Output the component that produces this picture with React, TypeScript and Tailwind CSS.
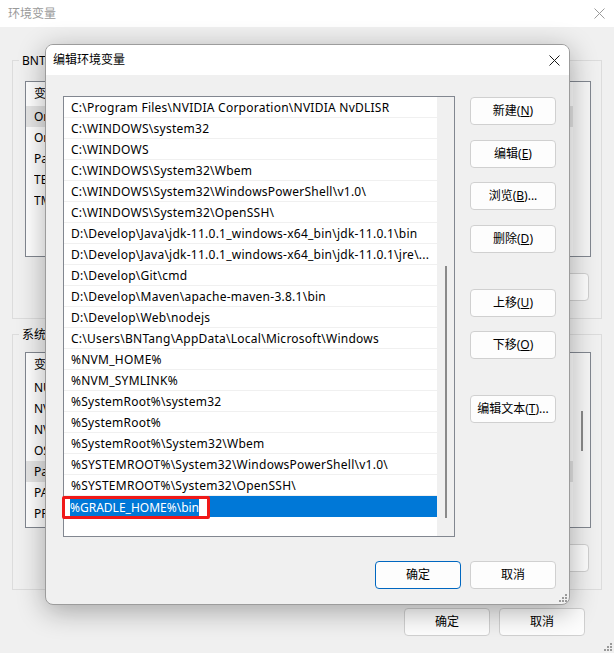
import React from "react";

const paths = [
  "C:\\Program Files\\NVIDIA Corporation\\NVIDIA NvDLISR",
  "C:\\WINDOWS\\system32",
  "C:\\WINDOWS",
  "C:\\WINDOWS\\System32\\Wbem",
  "C:\\WINDOWS\\System32\\WindowsPowerShell\\v1.0\\",
  "C:\\WINDOWS\\System32\\OpenSSH\\",
  "D:\\Develop\\Java\\jdk-11.0.1_windows-x64_bin\\jdk-11.0.1\\bin",
  "D:\\Develop\\Java\\jdk-11.0.1_windows-x64_bin\\jdk-11.0.1\\jre\\...",
  "D:\\Develop\\Git\\cmd",
  "D:\\Develop\\Maven\\apache-maven-3.8.1\\bin",
  "D:\\Develop\\Web\\nodejs",
  "C:\\Users\\BNTang\\AppData\\Local\\Microsoft\\Windows",
  "%NVM_HOME%",
  "%NVM_SYMLINK%",
  "%SystemRoot%\\system32",
  "%SystemRoot%",
  "%SystemRoot%\\System32\\Wbem",
  "%SYSTEMROOT%\\System32\\WindowsPowerShell\\v1.0\\",
  "%SYSTEMROOT%\\System32\\OpenSSH\\",
];

const userVars = [
  ["OneDrive", "C:\\Users\\BNTang\\OneDrive"],
  ["OneDriveConsumer", "C:\\Users\\BNTang\\OneDrive"],
  ["Path", "C:\\Users\\BNTang\\AppData\\Local\\Microsoft\\WindowsApps;"],
  ["TEMP", "C:\\Users\\BNTang\\AppData\\Local\\Temp"],
  ["TMP", "C:\\Users\\BNTang\\AppData\\Local\\Temp"],
];

const sysVars = [
  ["NUMBER_OF_PROCESSORS", "12"],
  ["NVCUDASAMPLES_ROOT", "C:\\ProgramData\\NVIDIA Corporation\\CUDA Samples"],
  ["NVTOOLSEXT_PATH", "C:\\Program Files\\NVIDIA Corporation\\NvToolsExt\\"],
  ["OS", "Windows_NT"],
  ["Path", "C:\\Program Files\\NVIDIA Corporation\\NVIDIA NvDLISR;"],
  ["PATHEXT", ".COM;.EXE;.BAT;.CMD;.VBS;.VBE;.JS;.JSE;.WSF;.WSH;.MSC"],
  ["PROCESSOR_ARCHITECTURE", "AMD64"],
];

const CloseIcon = ({ color }: { color: string }) => (
  <svg width="11" height="11" viewBox="0 0 11 11">
    <path d="M0.5 0.5L10.5 10.5M10.5 0.5L0.5 10.5" stroke={color} strokeWidth="1" />
  </svg>
);

const Grip = () => (
  <svg width="8" height="8" viewBox="0 0 8 8" fill="#9a9a9a">
    <rect x="6" y="0" width="2" height="2" />
    <rect x="3" y="3" width="2" height="2" />
    <rect x="6" y="3" width="2" height="2" />
    <rect x="0" y="6" width="2" height="2" />
    <rect x="3" y="6" width="2" height="2" />
    <rect x="6" y="6" width="2" height="2" />
  </svg>
);

const Btn = ({
  children,
  primary,
  className = "",
}: {
  children: React.ReactNode;
  primary?: boolean;
  className?: string;
}) => (
  <div
    className={
      "flex w-[86px] h-[28px] items-center justify-center rounded-[4px] border bg-[#fdfdfd] text-[12px] text-black " +
      (primary ? "border-[#0067c0] " : "border-[#d0d0d0] ") +
      className
    }
  >
    {children}
  </div>
);

const VarList = ({ rows, selected, thumb }: { rows: string[][]; selected: number; thumb?: boolean }) => (
  <div className="flex h-[176px] border border-[#828790] bg-white">
    <div className="flex-1 flex flex-col">
      <div className="flex h-[24px] items-center pl-[8px] text-[12px]">
        <span className="w-[150px]">变量</span>
        <span>值</span>
      </div>
      {rows.map((r, i) => (
        <div
          key={r[0]}
          className={"flex h-[21px] items-center pl-[8px] text-[12px] " + (i === selected ? "bg-[#e5e5e5]" : "")}
        >
          <span className="w-[150px] truncate">{r[0]}</span>
          <span className="w-[360px] truncate">{r[1]}</span>
        </div>
      ))}
    </div>
    <div className="w-[17px] bg-[#f7f7f7] flex justify-center">
      {thumb && <div className="mt-[58px] h-[40px] w-[2px] bg-[#8a8a8a]" />}
    </div>
  </div>
);

const GroupButtons = () => (
  <div className="mt-[16px] flex justify-end gap-[8px] pr-[2px]">
    <Btn className="h-[26px]">新建(<span className="underline">W</span>)...</Btn>
    <Btn className="h-[26px]">编辑(<span className="underline">I</span>)...</Btn>
    <Btn className="h-[26px]">删除(<span className="underline">L</span>)</Btn>
  </div>
);

export default function App() {
  return (
    <div className="relative w-[614px] h-[653px] overflow-hidden bg-[#f0f0f0] font-['Noto_Sans','Noto_Sans_CJK_SC',sans-serif] text-black">
      {/* background window: 环境变量 */}
      <div className="flex h-[27px] items-center justify-between bg-white pl-[8px] pr-[9px] text-[12px] text-[#9a9a9a]">
        <span>环境变量</span>
        <CloseIcon color="#9a9a9a" />
      </div>
      <div className="flex flex-col px-[12px] pt-[25px]">
        <fieldset className="border border-[#dcdcdc] pl-[12px] pr-[10px] pt-[12px] pb-[17px]">
          <legend className="ml-[-6px] px-[3px] text-[12px] leading-[17px]">BNTang 的用户变量(<span className="underline">U</span>)</legend>
          <VarList rows={userVars} selected={0} />
          <GroupButtons />
        </fieldset>
        <fieldset className="mt-[7px] border border-[#dcdcdc] pl-[12px] pr-[10px] pt-[9px] pb-[17px]">
          <legend className="ml-[-6px] px-[3px] text-[12px] leading-[17px]">系统变量(<span className="underline">S</span>)</legend>
          <VarList rows={sysVars} selected={4} thumb />
          <GroupButtons />
        </fieldset>
        <div className="mt-[18px] flex justify-end gap-[9px] pr-[17px]">
          <Btn>确定</Btn>
          <Btn>取消</Btn>
        </div>
      </div>
      <div className="absolute right-[2px] bottom-[2px]">
        <Grip />
      </div>

      {/* dialog: 编辑环境变量 */}
      <div className="absolute left-[45px] top-[44px] flex w-[525px] h-[561px] flex-col overflow-hidden rounded-[8px] border border-[#9c9c9c] bg-[#f0f0f0] shadow-[0_6px_28px_rgba(0,0,0,0.32)]">
        <div className="flex h-[30px] items-center justify-between bg-white pl-[7px] pr-[9px] text-[12px]">
          <span>编辑环境变量</span>
          <CloseIcon color="#1a1a1a" />
        </div>
        <div className="flex flex-1 flex-col pl-[17px] pr-[13px] pt-[21px]">
          <div className="flex">
            <div className="flex w-[392px] h-[441px] border border-[#828790] bg-white">
              <div className="flex flex-1 flex-col">
                {paths.map((p) => (
                  <div
                    key={p}
                    className="flex h-[21px] items-center border-b border-[#f0f0f0] pl-[7px] pt-[2px] text-[12px] tracking-[0.25px] whitespace-nowrap"
                  >
                    {p}
                  </div>
                ))}
                <div className="relative flex h-[21px] items-center bg-[#0078d7]">
                  <div className="absolute left-[-2px] top-[0px] flex h-[23px] w-[148px] items-center rounded-[2px] border-[3px] border-[#f01818] bg-white pl-[5px]">
                    <span className="bg-[#0078d7] leading-[17px] text-[12px] text-white">%GRADLE_HOME%\bin</span>
                  </div>
                </div>
              </div>
              <div className="flex w-[17px] justify-center bg-[#f0f0f0]">
                <div className="mt-[169px] h-[252px] w-[2px] bg-[#8a8a8a]" />
              </div>
            </div>
            <div className="ml-[15px] flex flex-col">
              <Btn className="mt-[1px]">新建(<span className="underline">N</span>)</Btn>
              <Btn className="mt-[15px]">编辑(<span className="underline">E</span>)</Btn>
              <Btn className="mt-[14px]">浏览(<span className="underline">B</span>)...</Btn>
              <Btn className="mt-[15px]">删除(<span className="underline">D</span>)</Btn>
              <Btn className="mt-[36px]">上移(<span className="underline">U</span>)</Btn>
              <Btn className="mt-[14px]">下移(<span className="underline">O</span>)</Btn>
              <Btn className="mt-[36px]">编辑文本(<span className="underline">T</span>)...</Btn>
            </div>
          </div>
          <div className="mt-[24px] flex justify-end gap-[9px]">
            <Btn primary>确定</Btn>
            <Btn>取消</Btn>
          </div>
        </div>
        <div className="absolute right-[2px] bottom-[2px]">
          <Grip />
        </div>
      </div>
    </div>
  );
}
